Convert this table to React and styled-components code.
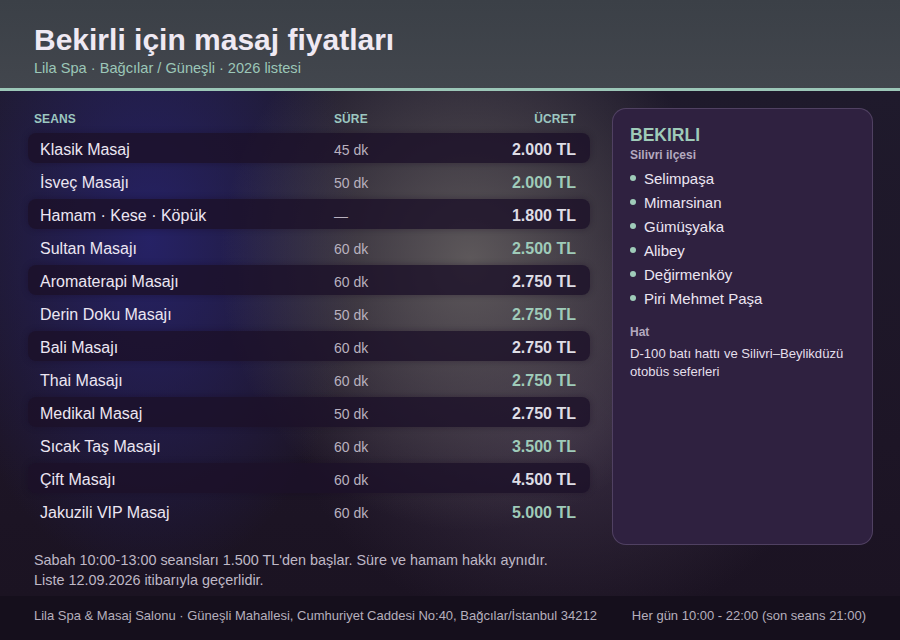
import React from "react";
import styled, { createGlobalStyle } from "styled-components";

const Global = createGlobalStyle`
  html, body { margin: 0; padding: 0; background: #150f1c; }
  body { font-family: "Liberation Sans", Arial, sans-serif; }
  * { box-sizing: border-box; }
`;

const Page = styled.div`
  width: 900px;
  height: 640px;
  display: flex;
  flex-direction: column;
  overflow: hidden;
  background: #150f1c;
`;

const Header = styled.header`
  height: 91px;
  padding: 22px 34px 0;
  background: linear-gradient(180deg, #3b4047 0%, #42464d 100%);
  border-bottom: 3px solid #9cc7b8;
`;

const Title = styled.h1`
  margin: 0;
  font-size: 30px;
  line-height: 36px;
  font-weight: 700;
  color: #efe9f3;
`;

const Subtitle = styled.div`
  margin-top: 1px;
  font-size: 14.6px;
  line-height: 19px;
  color: #9cc7b8;
`;

const Main = styled.main`
  flex: 1;
  display: flex;
  gap: 22px;
  padding: 17px 27px 0 28px;
  background:
    radial-gradient(ellipse 250px 270px at 470px 170px, rgba(100, 95, 96, 0.9), rgba(100, 95, 96, 0) 100%),
    radial-gradient(ellipse 210px 340px at 150px 150px, rgba(38, 34, 104, 0.95), rgba(38, 34, 104, 0) 100%),
    radial-gradient(ellipse 260px 200px at 560px 340px, rgba(80, 66, 90, 0.5), rgba(80, 66, 90, 0) 100%),
    linear-gradient(180deg, #1f1a2c 0%, #1d1526 70%, #1b1322 100%);
`;

const Left = styled.section`
  width: 562px;
  display: flex;
  flex-direction: column;
`;

const Grid = styled.div`
  display: flex;
  flex-direction: column;
  gap: 3px;
`;

const HeadRow = styled.div`
  display: grid;
  grid-template-columns: 300px 1fr auto;
  padding: 0 14px 0 6px;
  height: 22px;
  align-items: center;
  font-size: 12px;
  font-weight: 700;
  color: #9cc7c0;
  letter-spacing: 0.1px;
`;

const HeadCell = styled.div`
  text-align: ${(p) => (p.$right ? "right" : "left")};
`;

const Row = styled.div`
  display: grid;
  grid-template-columns: 294px 1fr auto;
  padding: 4px 14px 0 12px;
  height: 30px;
  align-items: center;
  border-radius: 8px;
  background: ${(p) => (p.$striped ? "rgba(28, 16, 40, 0.8)" : "transparent")};
  box-shadow: ${(p) => (p.$striped ? "0 0 6px rgba(20,10,30,0.35)" : "none")};
`;

const Name = styled.div`
  font-size: 16px;
  color: #ece6f2;
`;

const Dur = styled.div`
  font-size: 14px;
  color: #b9b1bf;
  margin-top: -1px;
`;

const Price = styled.div`
  font-size: 16px;
  font-weight: 700;
  text-align: right;
  color: ${(p) => (p.$striped ? "#dedde5" : "#9fcbb9")};
`;

const Notes = styled.div`
  margin-top: 24px;
  padding-left: 6px;
  font-size: 14.4px;
  line-height: 20px;
  color: #bfb8c6;
`;

const Panel = styled.aside`
  width: 261px;
  height: 437px;
  border-radius: 14px;
  border: 1px solid rgba(160, 140, 180, 0.3);
  background: #2f2140;
  padding: 16px 17px;
  display: flex;
  flex-direction: column;
`;

const Area = styled.div`
  font-size: 17.5px;
  font-weight: 700;
  color: #9fcbb9;
  line-height: 20px;
`;

const Label = styled.div`
  font-size: 12px;
  font-weight: 700;
  color: #b4a9bf;
  line-height: 16px;
  margin-top: ${(p) => p.$mt || 0}px;
`;

const List = styled.ul`
  list-style: none;
  margin: 3px 0 0;
  padding: 0;
`;

const Item = styled.li`
  display: flex;
  align-items: center;
  gap: 8px;
  height: 24px;
  font-size: 15px;
  color: #ece6f2;
`;

const Dot = styled.span`
  width: 6px;
  height: 6px;
  border-radius: 50%;
  background: #9fcbb9;
  flex: none;
`;

const Desc = styled.div`
  margin-top: 5px;
  font-size: 13.1px;
  line-height: 18px;
  color: #e4dfea;
`;

const Footer = styled.footer`
  height: 44px;
  display: flex;
  align-items: center;
  justify-content: space-between;
  padding: 0 34px 5px;
  background: #150f1c;
  font-size: 13px;
  color: #b6afbd;
`;

const rows = [
  ["Klasik Masaj", "45 dk", "2.000 TL"],
  ["İsveç Masajı", "50 dk", "2.000 TL"],
  ["Hamam · Kese · Köpük", "—", "1.800 TL"],
  ["Sultan Masajı", "60 dk", "2.500 TL"],
  ["Aromaterapi Masajı", "60 dk", "2.750 TL"],
  ["Derin Doku Masajı", "50 dk", "2.750 TL"],
  ["Bali Masajı", "60 dk", "2.750 TL"],
  ["Thai Masajı", "60 dk", "2.750 TL"],
  ["Medikal Masaj", "50 dk", "2.750 TL"],
  ["Sıcak Taş Masajı", "60 dk", "3.500 TL"],
  ["Çift Masajı", "60 dk", "4.500 TL"],
  ["Jakuzili VIP Masaj", "60 dk", "5.000 TL"],
];

const areas = ["Selimpaşa", "Mimarsinan", "Gümüşyaka", "Alibey", "Değirmenköy", "Piri Mehmet Paşa"];

export default function App() {
  return (
    <Page>
      <Global />
      <Header>
        <Title>Bekirli için masaj fiyatları</Title>
        <Subtitle>Lila Spa · Bağcılar / Güneşli · 2026 listesi</Subtitle>
      </Header>
      <Main>
        <Left>
          <Grid>
            <HeadRow>
              <HeadCell>SEANS</HeadCell>
              <HeadCell>SÜRE</HeadCell>
              <HeadCell $right>ÜCRET</HeadCell>
            </HeadRow>
            {rows.map(([n, d, p], i) => (
              <Row key={n} $striped={i % 2 === 0}>
                <Name>{n}</Name>
                <Dur>{d}</Dur>
                <Price $striped={i % 2 === 0}>{p}</Price>
              </Row>
            ))}
          </Grid>
          <Notes>
            Sabah 10:00-13:00 seansları 1.500 TL'den başlar. Süre ve hamam hakkı aynıdır.
            <br />
            Liste 12.09.2026 itibarıyla geçerlidir.
          </Notes>
        </Left>
        <Panel>
          <Area>BEKIRLI</Area>
          <Label $mt={2}>Silivri ilçesi</Label>
          <List>
            {areas.map((a) => (
              <Item key={a}>
                <Dot />
                {a}
              </Item>
            ))}
          </List>
          <Label $mt={14}>Hat</Label>
          <Desc>D-100 batı hattı ve Silivri–Beylikdüzü otobüs seferleri</Desc>
        </Panel>
      </Main>
      <Footer>
        <span>Lila Spa &amp; Masaj Salonu · Güneşli Mahallesi, Cumhuriyet Caddesi No:40, Bağcılar/İstanbul 34212</span>
        <span>Her gün 10:00 - 22:00 (son seans 21:00)</span>
      </Footer>
    </Page>
  );
}
